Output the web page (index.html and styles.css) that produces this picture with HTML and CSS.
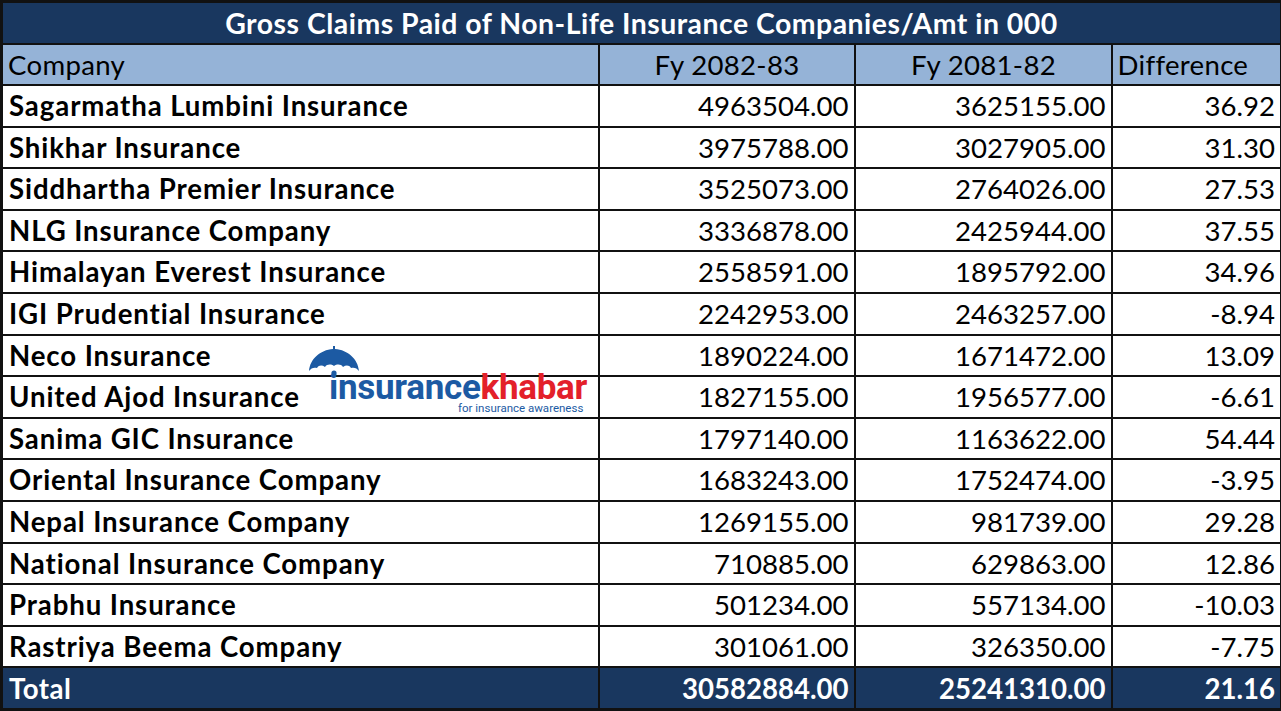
FILE: index.html
```html
<!DOCTYPE html>
<html lang="en">
<head>
<meta charset="utf-8">
<title>Gross Claims Paid of Non-Life Insurance Companies</title>
<link rel="stylesheet" href="styles.css">
</head>
<body>
<div class="sheet">
  <table class="claims">
    <colgroup>
      <col class="c-name">
      <col class="c-num">
      <col class="c-num2">
      <col class="c-diff">
    </colgroup>
    <thead>
      <tr class="title-row"><th colspan="4">Gross Claims Paid of Non-Life Insurance Companies/Amt in 000</th></tr>
      <tr class="head-row">
        <th class="left">Company</th>
        <th>Fy 2082-83</th>
        <th>Fy 2081-82</th>
        <th class="left">Difference</th>
      </tr>
    </thead>
    <tbody>
      <tr><td class="name">Sagarmatha Lumbini Insurance</td><td>4963504.00</td><td>3625155.00</td><td>36.92</td></tr>
      <tr><td class="name">Shikhar Insurance</td><td>3975788.00</td><td>3027905.00</td><td>31.30</td></tr>
      <tr><td class="name">Siddhartha Premier Insurance</td><td>3525073.00</td><td>2764026.00</td><td>27.53</td></tr>
      <tr><td class="name">NLG Insurance Company</td><td>3336878.00</td><td>2425944.00</td><td>37.55</td></tr>
      <tr><td class="name">Himalayan Everest Insurance</td><td>2558591.00</td><td>1895792.00</td><td>34.96</td></tr>
      <tr><td class="name">IGI Prudential Insurance</td><td>2242953.00</td><td>2463257.00</td><td>-8.94</td></tr>
      <tr><td class="name">Neco Insurance</td><td>1890224.00</td><td>1671472.00</td><td>13.09</td></tr>
      <tr><td class="name">United Ajod Insurance</td><td>1827155.00</td><td>1956577.00</td><td>-6.61</td></tr>
      <tr><td class="name">Sanima GIC Insurance</td><td>1797140.00</td><td>1163622.00</td><td>54.44</td></tr>
      <tr><td class="name">Oriental Insurance Company</td><td>1683243.00</td><td>1752474.00</td><td>-3.95</td></tr>
      <tr><td class="name">Nepal Insurance Company</td><td>1269155.00</td><td>981739.00</td><td>29.28</td></tr>
      <tr><td class="name">National Insurance Company</td><td>710885.00</td><td>629863.00</td><td>12.86</td></tr>
      <tr><td class="name">Prabhu Insurance</td><td>501234.00</td><td>557134.00</td><td>-10.03</td></tr>
      <tr><td class="name">Rastriya Beema Company</td><td>301061.00</td><td>326350.00</td><td>-7.75</td></tr>
    </tbody>
    <tfoot>
      <tr class="total-row"><td class="name">Total</td><td>30582884.00</td><td>25241310.00</td><td>21.16</td></tr>
    </tfoot>
  </table>

  <div class="logo">
    <svg class="umbrella" width="52" height="30" viewBox="0 0 52 30" aria-hidden="true">
      <path d="M25 0 h2 v3 C40 4 50 13 51 25 C49 22 46 21 43 22 C41 19 38 19 35 21 C33 18 29 18 26 20 C23 18 19 18 17 21 C14 19 11 19 9 22 C6 21 3 22 1 25 C2 13 12 4 25 3 Z" fill="#1c5aa3"/>
      <circle cx="26" cy="27" r="2.6" fill="#1c5aa3"/>
    </svg>
    <div class="logo-word"><span class="blue">insurance</span><span class="red">khabar</span></div>
    <div class="logo-tag">for insurance awareness</div>
  </div>
</div>
</body>
</html>
```

FILE: styles.css
```css
html, body {
  margin: 0;
  padding: 0;
  background: #ffffff;
}

.sheet {
  position: relative;
  width: 1281px;
  height: 711px;
  overflow: hidden;
}

.claims {
  border-collapse: collapse;
  width: 1280px;
  table-layout: fixed;
  font-family: "Lato", "Liberation Sans", sans-serif;
  font-size: 27.6px;
  color: #000;
  border: 3px solid #111;
}

.c-name { width: 597px; }
.c-num { width: 256px; }
.c-num2 { width: 257px; }
.c-diff { width: 170px; }

.claims th,
.claims td {
  border: 2px solid #111;
  padding: 0 5px 0 6px;
  line-height: 1;
  white-space: nowrap;
}

.title-row th {
  background: #19375f;
  color: #ffffff;
  font-weight: 700;
  font-size: 28.4px;
  letter-spacing: 0.5px;
  height: 40px;
  text-align: center;
  padding: 0;
}

.head-row th {
  background: #95b3d7;
  font-weight: 400;
  text-align: center;
  letter-spacing: 0.3px;
  height: 39px;
}

.head-row th.left {
  text-align: left;
  padding-left: 5px;
}

.claims tbody td {
  height: 39.6px;
  text-align: right;
  font-weight: 400;
  background: #ffffff;
}

.claims td.name {
  text-align: left;
  font-weight: 700;
  letter-spacing: 0.9px;
}

.total-row td {
  background: #19375f;
  color: #ffffff;
  text-align: right;
  font-weight: 700;
  height: 40px;
}

.total-row td.name {
  text-align: left;
  letter-spacing: 0.5px;
}

.logo {
  position: absolute;
  left: 306px;
  top: 346px;
  width: 290px;
  height: 70px;
}

.umbrella {
  position: absolute;
  left: 2px;
  top: 0;
}

.logo-word {
  position: absolute;
  left: 23px;
  top: 27px;
  height: 29px;
  font-family: "Roboto", "Liberation Sans", sans-serif;
  font-weight: 700;
  font-size: 35px;
  line-height: 29px;
  letter-spacing: -0.3px;
  white-space: nowrap;
}

.logo-word .blue { color: #1c5aa3; }
.logo-word .red { color: #e3202a; }

.logo-tag {
  position: absolute;
  left: 152px;
  top: 57px;
  font-family: "Roboto", "Liberation Sans", sans-serif;
  font-size: 11.5px;
  line-height: 10px;
  color: #1c5aa3;
  white-space: nowrap;
}
```
